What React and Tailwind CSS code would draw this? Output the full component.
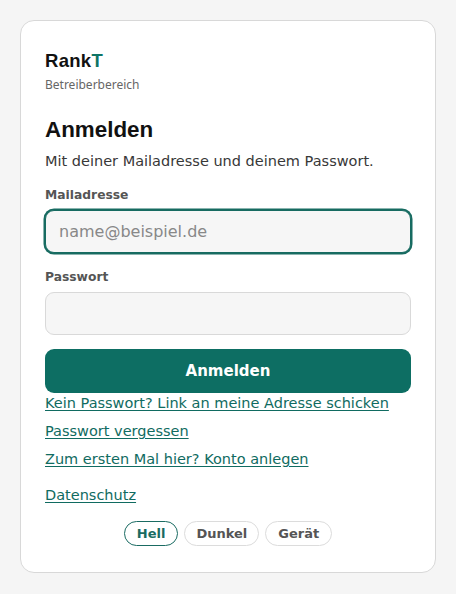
export default function App() {
  return (
    <div className="min-h-[594px] bg-[#f5f5f5] p-5" style={{ fontFamily: '"DejaVu Sans", sans-serif' }}>
      <div className="rounded-[14px] border border-[#d8d8d8] bg-white px-6 pt-7 pb-[26px]">
        <div className="text-[18.5px] leading-[24px] font-bold text-[#111] tracking-[0.3px]" style={{ fontFamily: '"Liberation Sans", Arial, sans-serif' }}>
          Rank<span className="text-[#0f7566]">T</span>
        </div>
        <div className="mt-1 text-[12px] leading-[16px] text-[#666]" style={{ fontFamily: '"Noto Sans", sans-serif' }}>Betreiberbereich</div>

        <h1 className="mt-[23px] text-[22.4px] leading-[28px] font-bold text-[#111]" style={{ fontFamily: '"Liberation Sans", Arial, sans-serif' }}>
          Anmelden
        </h1>
        <p className="mt-[7px] text-[14.5px] leading-[20px] text-[#383838]">Mit deiner Mailadresse und deinem Passwort.</p>

        <label className="mt-4 block text-[12.3px] leading-[16px] font-bold text-[#555]">Mailadresse</label>
        <input
          type="email"
          placeholder="name@beispiel.de"
          className="mt-[7px] block h-[43px] w-full rounded-[9px] border border-[#176b61] bg-[#f6f6f6] px-[13px] text-[16px] text-[#222] placeholder:text-[#888] outline-none ring-[1.5px] ring-[#176b61]"
        />

        <label className="mt-4 block text-[12.3px] leading-[16px] font-bold text-[#555]">Passwort</label>
        <input
          type="password"
          className="mt-[7px] block h-[43px] w-full rounded-[9px] border border-[#d9d9d9] bg-[#f6f6f6] px-[13px] text-[16px] outline-none"
        />

        <button className="mt-[14px] block h-[44px] w-full rounded-[9px] bg-[#0d6e63] text-[15px] font-bold text-white">
          Anmelden
        </button>

        <div className="flex flex-col items-start gap-2 text-[14.5px] leading-[20px] text-[#106b61]">
          <a href="#" className="underline underline-offset-2">Kein Passwort? Link an meine Adresse schicken</a>
          <a href="#" className="underline underline-offset-2">Passwort vergessen</a>
          <a href="#" className="underline underline-offset-2">Zum ersten Mal hier? Konto anlegen</a>
          <a href="#" className="mt-2 underline underline-offset-2">Datenschutz</a>
        </div>

        <div className="mt-4 flex justify-center gap-[6px]">
          <button className="h-[25px] rounded-full border-[1.5px] border-[#1a6b62] px-3 text-[13px] font-bold text-[#1a6b62]">Hell</button>
          <button className="h-[25px] rounded-full border border-[#dcdcdc] px-[11px] text-[13px] font-bold text-[#555]">Dunkel</button>
          <button className="h-[25px] rounded-full border border-[#dcdcdc] px-3 text-[13px] font-bold text-[#555]">Gerät</button>
        </div>
      </div>
    </div>
  );
}
